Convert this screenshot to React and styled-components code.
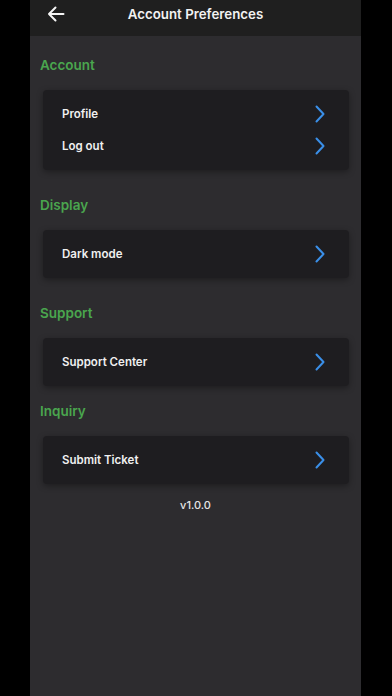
import React from "react"
import styled, { createGlobalStyle } from "styled-components"

const GlobalStyle = createGlobalStyle`
  html, body {
    margin: 0;
    padding: 0;
    background: #000;
  }
  body {
    font-family: Inter, "Noto Sans", sans-serif;
  }
`

const Screen = styled.div`
  width: 331px;
  min-height: 696px;
  margin: 0 0 0 30px;
  background: #2d2c2f;
  display: flex;
  flex-direction: column;
`

const Header = styled.header`
  height: 36px;
  background: #1f1f1f;
  display: flex;
  align-items: center;
  padding-left: 17px;
  padding-bottom: 8px;
  box-sizing: border-box;
`

const BackButton = styled.button`
  background: none;
  border: 0;
  padding: 0;
  width: 18px;
  height: 16px;
  display: flex;
  align-items: center;
  justify-content: center;
  cursor: pointer;
`

const Title = styled.h1`
  flex: 1;
  margin: 0 0 0 -18px;
  padding-right: 17px;
  text-align: center;
  color: #f2f2f2;
  font-size: 13.3px;
  font-weight: 600;
`

const Section = styled.section`
  padding-top: ${p => p.$top}px;
  display: flex;
  flex-direction: column;
`

const SectionLabel = styled.h2`
  margin: 0 0 15px 10px;
  height: 20px;
  line-height: 20px;
  color: #4aa64e;
  font-size: 13.5px;
  font-weight: 600;
`

const Card = styled.div`
  margin: 0 12px 0 13px;
  background: #1e1d20;
  border-radius: 4px;
  padding: 8px 0;
  box-shadow: 0 2px 6px rgba(0, 0, 0, 0.35);
`

const Row = styled.div`
  height: 32px;
  display: flex;
  align-items: center;
  justify-content: space-between;
  padding: 0 22px 0 19px;
`

const RowText = styled.span`
  color: #f0f0f0;
  font-size: 11.5px;
  font-weight: 600;
`

const Version = styled.div`
  margin-top: 14px;
  text-align: center;
  color: #e6e6e6;
  font-size: 11px;
  font-weight: 500;
`

const Chevron = () => (
  <svg width="12" height="18" viewBox="0 0 12 18" fill="none">
    <path d="M1.5 1.5 L8.5 9 L1.5 16.5" stroke="#3a8fe8" strokeWidth="2" strokeLinecap="round" strokeLinejoin="round" />
  </svg>
)

const BackArrow = () => (
  <svg width="18" height="16" viewBox="0 0 18 16" fill="none">
    <path d="M16.5 8 H2 M8.5 1.5 L2 8 L8.5 14.5" stroke="#f5f5f5" strokeWidth="2" strokeLinecap="round" strokeLinejoin="round" />
  </svg>
)

const sections = [
  { title: "Account", top: 19, items: ["Profile", "Log out"] },
  { title: "Display", top: 25, items: ["Dark mode"] },
  { title: "Support", top: 25, items: ["Support Center"] },
  { title: "Inquiry", top: 15, items: ["Submit Ticket"] },
]

const App = () => (
  <>
    <GlobalStyle />
    <Screen>
      <Header>
        <BackButton aria-label="Back">
          <BackArrow />
        </BackButton>
        <Title>Account Preferences</Title>
      </Header>
      {sections.map(section => (
        <Section key={section.title} $top={section.top}>
          <SectionLabel>{section.title}</SectionLabel>
          <Card>
            {section.items.map(item => (
              <Row key={item}>
                <RowText>{item}</RowText>
                <Chevron />
              </Row>
            ))}
          </Card>
        </Section>
      ))}
      <Version>v1.0.0</Version>
    </Screen>
  </>
)

export default App
